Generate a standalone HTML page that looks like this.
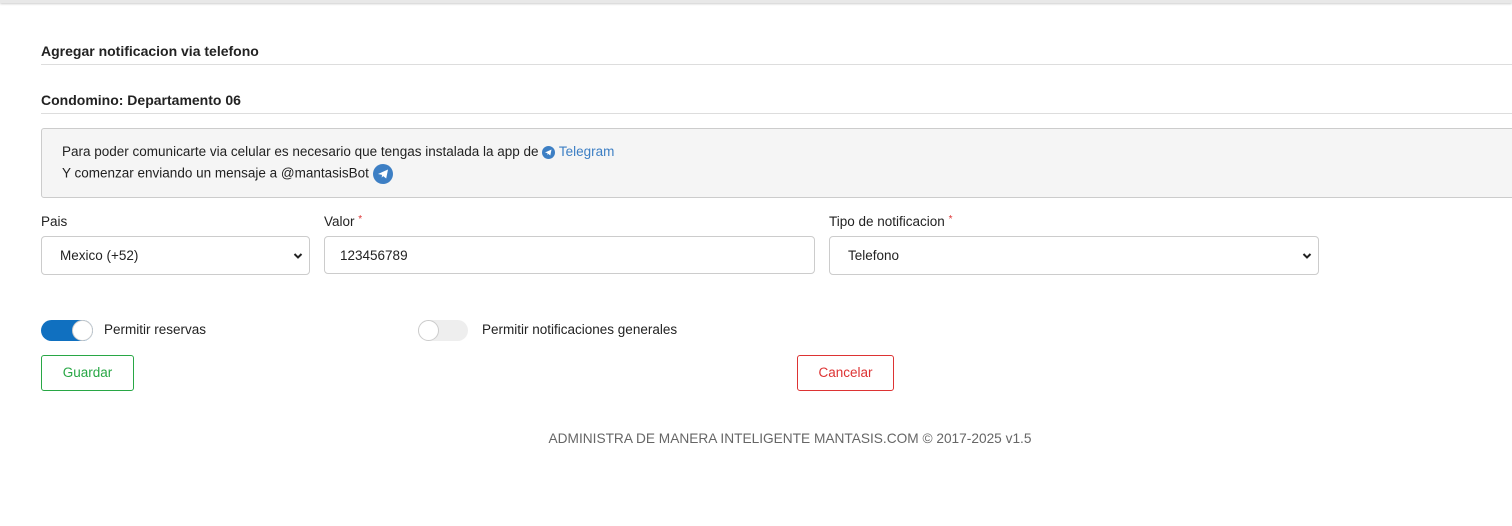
<!DOCTYPE html>
<html><head><style>
*{box-sizing:border-box;margin:0;padding:0}
body{width:1512px;height:526px;background:#fff;font-family:"Liberation Sans",sans-serif;color:#222;position:relative;overflow:hidden;font-size:13.5px}
.a{position:absolute}
.h{font-weight:bold;font-size:14px}
.line{height:1px;background:#ddd;left:41px;right:0}
.box{border:1px solid #ccc;border-radius:4px;background:#fff}
.tg{display:inline-block;background:#3d7fc4;border-radius:50%;vertical-align:middle;position:relative}
.chev{position:absolute;right:6px;top:15px}
</style></head><body>
<div class="a" style="left:0;top:0;width:1512px;height:3px;background:#e8e8e8;box-shadow:0 1px 2px #ccc"></div>
<div class="a h" style="left:41px;top:43px">Agregar notificacion via telefono</div>
<div class="a line" style="top:64px"></div>
<div class="a h" style="left:41px;top:92px">Condomino: Departamento 06</div>
<div class="a line" style="top:113px"></div>
<div class="a" style="left:41px;top:128px;width:1480px;height:70px;background:#f5f5f5;border:1px solid #ccc;border-radius:3px"></div>
<div class="a" style="left:62px;top:144px;font-size:13.5px">Para poder comunicarte via celular es necesario que tengas instalada la app de <span class="tg" style="width:13px;height:13px"><svg width="13" height="13" viewBox="0 0 13 13"><path d="M3 6.5l6.5-3-1.2 6-2-1.6-1 1 .2-1.8z" fill="#fff"/></svg></span> <span style="color:#3d7fc4">Telegram</span></div>
<div class="a" style="left:62px;top:164px;font-size:13.5px">Y comenzar enviando un mensaje a @mantasisBot <span class="tg" style="width:20px;height:20px"><svg width="20" height="20" viewBox="0 0 20 20"><path d="M5 10l10-4.5-1.8 9-3-2.4-1.5 1.5.3-2.7z" fill="#fff"/></svg></span></div>
<div class="a" style="left:41px;top:214px">Pais</div>
<div class="a" style="left:324px;top:214px">Valor <span style="color:#d33;font-size:10px;vertical-align:top">*</span></div>
<div class="a" style="left:829px;top:214px">Tipo de notificacion <span style="color:#d33;font-size:10px;vertical-align:top">*</span></div>
<div class="a box" style="left:41px;top:236px;width:269px;height:39px;padding:11px 18px">Mexico (+52)<svg class="chev" width="10" height="8" viewBox="0 0 10 8"><path d="M1.5 2l3.5 3.5L8.5 2" fill="none" stroke="#222" stroke-width="2"/></svg></div>
<div class="a box" style="left:324px;top:236px;width:491px;height:38px;padding:11px 15px">123456789</div>
<div class="a box" style="left:829px;top:236px;width:490px;height:39px;padding:11px 18px">Telefono<svg class="chev" width="10" height="8" viewBox="0 0 10 8"><path d="M1.5 2l3.5 3.5L8.5 2" fill="none" stroke="#222" stroke-width="2"/></svg></div>
<div class="a" style="left:41px;top:320px;width:52px;height:21px;border-radius:11px;background:#1070c0"></div>
<div class="a" style="left:72px;top:320px;width:21px;height:21px;border-radius:50%;background:#fff;border:1px solid #ccc"></div>
<div class="a" style="left:104px;top:322px">Permitir reservas</div>
<div class="a" style="left:418px;top:320px;width:50px;height:21px;border-radius:11px;background:#eee"></div>
<div class="a" style="left:418px;top:320px;width:21px;height:21px;border-radius:50%;background:#fff;border:1px solid #ccc"></div>
<div class="a" style="left:482px;top:322px">Permitir notificaciones generales</div>
<div class="a" style="left:41px;top:355px;width:93px;height:36px;border:1px solid #28a745;border-radius:3px;color:#28a745;text-align:center;line-height:34px">Guardar</div>
<div class="a" style="left:797px;top:355px;width:97px;height:36px;border:1px solid #d33;border-radius:3px;color:#d33;text-align:center;line-height:34px">Cancelar</div>
<div class="a" style="left:0;width:1580px;top:431px;text-align:center;color:#666;font-size:13.7px">ADMINISTRA DE MANERA INTELIGENTE MANTASIS.COM © 2017-2025 v1.5</div>
</body></html>
